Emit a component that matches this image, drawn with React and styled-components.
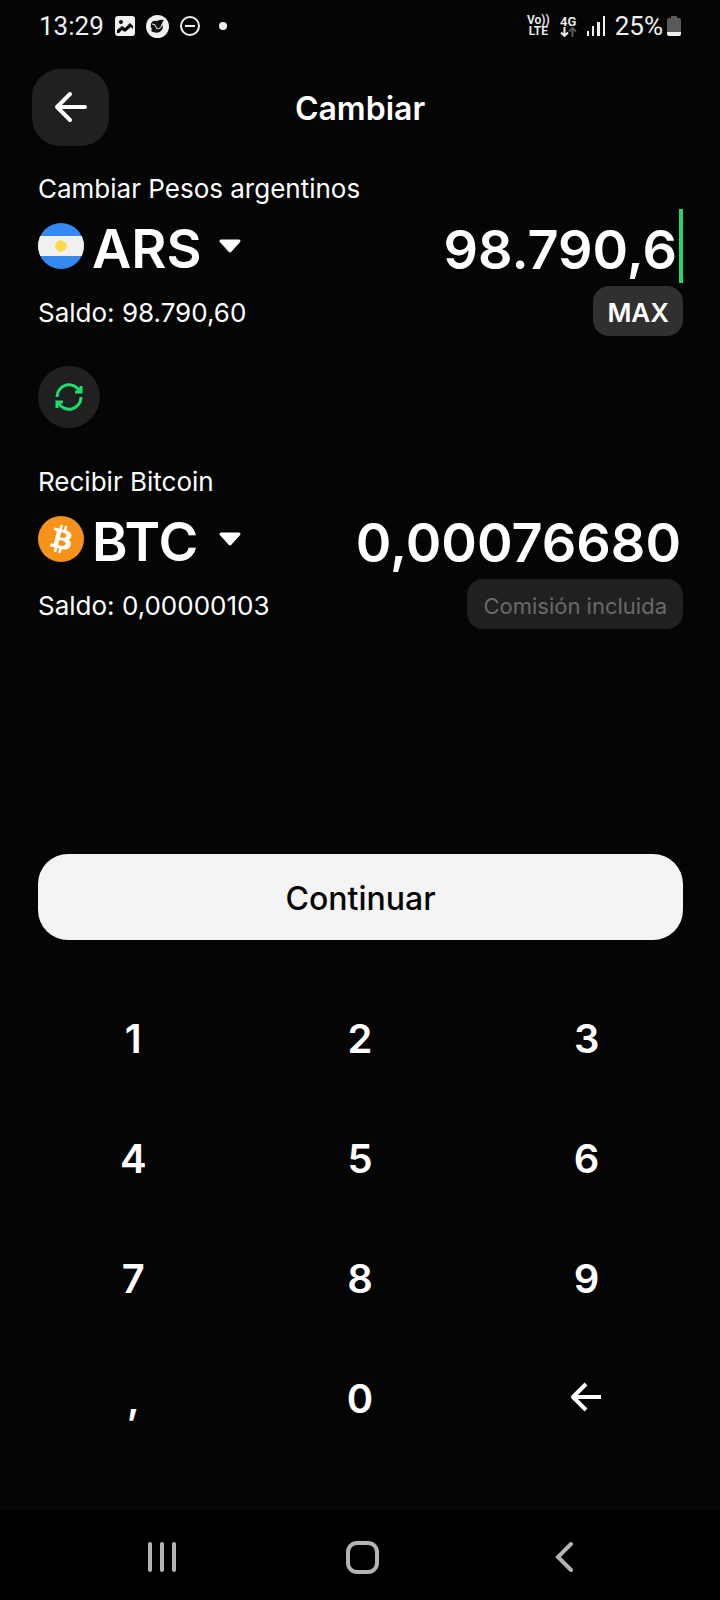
import styled, { createGlobalStyle } from "styled-components";
import { useState } from "react";

const GlobalStyle = createGlobalStyle`
  * {
    box-sizing: border-box;
  }

  body {
    margin: 0;
    background: #050505;
    color: #ffffff;
    font-family: Inter, sans-serif;
  }

  button,
  input,
  select {
    margin: 0;
    padding: 0;
    border: none;
    outline: none;
    color: inherit;
    font-family: inherit;
  }

  button {
    cursor: pointer;
  }

  svg {
    display: block;
    flex-shrink: 0;
  }
`;

const Screen = styled.div`
  display: flex;
  flex-direction: column;
  min-height: 100vh;
`;

const StatusBar = styled.div`
  display: flex;
  justify-content: space-between;
  align-items: center;
  height: 52px;
  padding: 0 39px;
  color: #f0f0f0;
  font-family: Roboto, sans-serif;
  font-size: 26px;
  line-height: 32px;
`;

const StatusGroup = styled.div`
  display: flex;
  align-items: center;
  gap: ${(props) => props.gap}px;
`;

const StackedText = styled.div`
  font-size: ${(props) => props.size}px;
  font-weight: 600;
  line-height: 11px;
  text-align: center;
`;

const Header = styled.header`
  display: grid;
  grid-template-columns: 77px 1fr 77px;
  align-items: center;
  padding: 17px 32px 0;
`;

const BackButton = styled.button`
  display: flex;
  justify-content: center;
  align-items: center;
  height: 77px;
  border-radius: 28px;
  background: #202020;
`;

const Title = styled.h1`
  margin: 0;
  padding-top: 2px;
  font-size: 32px;
  font-weight: 600;
  line-height: 40px;
  text-align: center;
`;

const Content = styled.main`
  padding: 26px 37px 0 38px;
`;

const Label = styled.label`
  display: block;
  font-size: 26px;
  line-height: 34px;
`;

const AmountRow = styled.div`
  display: flex;
  align-items: center;
  height: 74px;
  margin-top: 3px;
`;

const Picker = styled.div`
  display: grid;
  align-items: center;
  margin-left: 8px;

  select,
  svg {
    grid-area: 1 / 1;
  }

  svg {
    justify-self: end;
    pointer-events: none;
  }
`;

const CurrencySelect = styled.select`
  width: 149px;
  height: 74px;
  padding-top: 6px;
  appearance: none;
  background: transparent;
  font-size: 54px;
  font-weight: 600;
  line-height: 68px;

  option {
    background: #202020;
  }
`;

const AmountInput = styled.input`
  flex: 1;
  min-width: 0;
  height: 74px;
  padding: 6px 2px 0 0;
  background: transparent;
  font-size: 54px;
  font-weight: 600;
  line-height: 68px;
  text-align: right;
`;

const Caret = styled.span`
  width: 4px;
  height: 74px;
  background: #22d66b;
`;

const BalanceRow = styled.div`
  display: flex;
  justify-content: space-between;
  align-items: center;
  margin-top: 3px;
`;

const Balance = styled.span`
  padding-top: 4px;
  font-size: 26px;
  line-height: 34px;
`;

const MaxButton = styled.button`
  height: 50px;
  padding: 2px 14px 0;
  border-radius: 16px;
  background: #303030;
  font-size: 26px;
  font-weight: 600;
`;

const FeeTag = styled.span`
  padding: 10px 16px 6px;
  border-radius: 16px;
  background: #202020;
  color: #6a6a6a;
  font-size: 22px;
  line-height: 34px;
`;

const SwapButton = styled.button`
  display: flex;
  justify-content: center;
  align-items: center;
  width: 62px;
  height: 62px;
  margin: 30px 0 37px;
  border-radius: 50%;
  background: #202020;
`;

const ContinueButton = styled.button`
  display: block;
  width: 100%;
  height: 86px;
  margin-top: 225px;
  padding-top: 2px;
  border-radius: 30px;
  background: #f4f4f4;
  color: #050505;
  font-size: 32px;
  font-weight: 500;
`;

const Keypad = styled.div`
  display: grid;
  grid-template-columns: repeat(3, 1fr);
  grid-auto-rows: 120px;
  padding: 38px 20px 0;
`;

const Key = styled.button`
  display: flex;
  justify-content: center;
  align-items: center;
  background: transparent;
  font-size: 40px;
  font-weight: 600;
`;

const NavBar = styled.nav`
  display: grid;
  grid-template-columns: repeat(3, 1fr);
  height: 90px;
  margin-top: auto;
  padding: 4px 56px 0 62px;
  background: #000000;
`;

const NavButton = styled.button`
  display: flex;
  justify-content: center;
  align-items: center;
  background: transparent;
`;

const RATE = 128834898;
const KEYS = ["1", "2", "3", "4", "5", "6", "7", "8", "9", ",", "0"];

const formatAmount = (value) => {
  const [whole, decimals] = value.split(",");
  const grouped = whole.replace(/\B(?=(\d{3})+$)/g, ".");
  return decimals === undefined ? grouped : `${grouped},${decimals}`;
};

const toBitcoin = (value) =>
  (Number(value.replace(",", ".")) / RATE).toFixed(8).replace(".", ",");

function ArrowLeft({ cap }) {
  return (
    <svg
      width="34"
      height="34"
      viewBox="0 0 34 34"
      fill="none"
      stroke="#fff"
      strokeWidth="4"
      strokeLinecap={cap}
      strokeLinejoin="round"
    >
      <path d="M31 16H3M16 3 3 16l13 13" />
    </svg>
  );
}

function ArgentinaFlag() {
  return (
    <svg width="46" height="46" viewBox="0 0 46 46">
      <clipPath id="flag">
        <circle cx="23" cy="23" r="23" />
      </clipPath>
      <g clipPath="url(#flag)">
        <rect width="46" height="46" fill="#338af3" />
        <rect y="13" width="46" height="20" fill="#f0f0f0" />
        <circle cx="23" cy="23" r="5" fill="#ffda44" />
        <path
          d="M23 17v12M17 23h12M19 19l8 8M27 19l-8 8"
          stroke="#ffda44"
          strokeWidth="3"
        />
      </g>
    </svg>
  );
}

function BitcoinLogo() {
  return (
    <svg width="46" height="46" viewBox="0 0 32 32">
      <circle cx="16" cy="16" r="16" fill="#f7931a" />
      <path
        fill="#fff"
        d="M23.189 14.02c.314-2.096-1.283-3.223-3.465-3.975l.708-2.84-1.728-.43-.69 2.765c-.454-.114-.92-.22-1.385-.326l.695-2.783L15.596 6l-.708 2.839c-.376-.086-.746-.17-1.104-.26l.002-.009-2.384-.595-.46 1.846s1.283.294 1.256.312c.7.175.826.638.805 1.006l-.806 3.235c.048.012.11.03.18.057l-.183-.045-1.13 4.532c-.086.212-.303.531-.793.41.018.025-1.256-.313-1.256-.313l-.858 1.978 2.25.561c.418.105.828.215 1.231.318l-.715 2.872 1.727.43.708-2.84c.472.127.93.245 1.378.357l-.706 2.828 1.728.43.715-2.866c2.948.558 5.164.333 6.097-2.333.752-2.146-.037-3.385-1.588-4.192 1.13-.26 1.98-1.003 2.207-2.538zm-3.95 5.538c-.533 2.147-4.148.986-5.32.695l.95-3.805c1.172.293 4.929.872 4.37 3.11zm.535-5.569c-.487 1.953-3.495.96-4.47.717l.86-3.45c.975.243 4.118.696 3.61 2.733z"
      />
    </svg>
  );
}

function CurrencyPicker({ label, value, onChange }) {
  return (
    <Picker>
      <CurrencySelect
        aria-label={label}
        value={value}
        onChange={(e) => onChange(e.target.value)}
      >
        <option>ARS</option>
        <option>BTC</option>
      </CurrencySelect>
      <svg width="22" height="14" viewBox="0 0 22 14">
        <path
          d="M2 2h18l-9 10z"
          fill="#fff"
          stroke="#fff"
          strokeWidth="3"
          strokeLinejoin="round"
        />
      </svg>
    </Picker>
  );
}

function App() {
  const [amount, setAmount] = useState("98790,6");
  const [from, setFrom] = useState("ARS");
  const [to, setTo] = useState("BTC");

  const handleKey = (key) => {
    if (key === "," && amount.includes(",")) return;
    setAmount(amount === "0" && key !== "," ? key : amount + key);
  };

  const handleDelete = () => {
    setAmount(amount.slice(0, -1) || "0");
  };

  const handleSwap = () => {
    setFrom(to);
    setTo(from);
  };

  return (
    <Screen>
      <GlobalStyle />
      <StatusBar>
        <StatusGroup gap={11}>
          <span>13:29</span>
          <svg width="20" height="20" viewBox="0 0 20 20">
            <rect width="20" height="20" rx="3" fill="#f0f0f0" />
            <circle cx="6" cy="6" r="2" fill="#050505" />
            <path
              d="M2 14l5-4 3 2 5-5 3 3v3l-2-2-6 5-3-2-3 3H2z"
              fill="#050505"
            />
          </svg>
          <svg width="23" height="23" viewBox="0 0 23 23">
            <circle cx="11.5" cy="11.5" r="11.5" fill="#f0f0f0" />
            <path
              d="M5 9q1-4 6-3 4-2 7-1-2 2-2 4 2 4-1 7-3 3-8 1-3-1-1-3-2-2-1-5z"
              fill="#111"
            />
            <path
              d="M6 9q4 0 4 3t4 1q2-2 2-4"
              fill="none"
              stroke="#f0f0f0"
            />
          </svg>
          <svg width="20" height="20" viewBox="0 0 20 20">
            <g fill="none" stroke="#f0f0f0" strokeWidth="2">
              <circle cx="10" cy="10" r="9" />
              <path d="M5 10h10" />
            </g>
          </svg>
          <svg width="24" height="8" viewBox="0 0 24 8">
            <circle cx="12" cy="4" r="4" fill="#f0f0f0" />
          </svg>
        </StatusGroup>
        <StatusGroup gap={10}>
          <StackedText size={12}>
            Vo))
            <br />
            LTE
          </StackedText>
          <StackedText size={13}>
            4G
            <svg width="17" height="10" viewBox="0 0 17 10" fill="none">
              <path
                d="M4.500 0v9M1 5.500 4.500 9 8 5.500"
                stroke="#f0f0f0"
                strokeWidth="2"
              />
              <path
                d="M12.500 10V1M9 4.500 12.500 1 16 4.500"
                stroke="#5a5a5a"
                strokeWidth="2"
              />
            </svg>
          </StackedText>
          <svg width="18" height="20" viewBox="0 0 18 20" fill="#f0f0f0">
            <rect y="15" width="2" height="5" />
            <rect x="5" y="10" width="2" height="10" />
            <rect x="10" y="6" width="3" height="14" />
            <rect x="16" width="2" height="20" />
          </svg>
          <StatusGroup gap={4}>
            <span>25%</span>
            <svg width="14" height="20" viewBox="0 0 14 20">
              <path
                d="M4 0h6v2h2q2 0 2 2v12H0V4q0-2 2-2h2z"
                fill="#5a5a5a"
              />
              <path d="M0 16h14v2q0 2-2 2H2q-2 0-2-2z" fill="#f0f0f0" />
            </svg>
          </StatusGroup>
        </StatusGroup>
      </StatusBar>

      <Header>
        <BackButton aria-label="Volver">
          <ArrowLeft cap="round" />
        </BackButton>
        <Title>Cambiar</Title>
      </Header>

      <Content>
        <Label htmlFor="send">Cambiar Pesos argentinos</Label>
        <AmountRow>
          <ArgentinaFlag />
          <CurrencyPicker
            label="Moneda a cambiar"
            value={from}
            onChange={setFrom}
          />
          <AmountInput id="send" readOnly value={formatAmount(amount)} />
          <Caret />
        </AmountRow>
        <BalanceRow>
          <Balance>Saldo: 98.790,60</Balance>
          <MaxButton onClick={() => setAmount("98790,6")}>MAX</MaxButton>
        </BalanceRow>

        <SwapButton aria-label="Invertir monedas" onClick={handleSwap}>
          <svg
            width="28"
            height="28"
            viewBox="0 0 28 28"
            fill="none"
            stroke="#1be06e"
            strokeWidth="3"
          >
            <path d="M2 14a12 12 0 0 1 23-5M26 14a12 12 0 0 1-23 5" />
            <path d="M26 3v6h-6M2 25v-6h6" />
          </svg>
        </SwapButton>

        <Label htmlFor="receive">Recibir Bitcoin</Label>
        <AmountRow>
          <BitcoinLogo />
          <CurrencyPicker
            label="Moneda a recibir"
            value={to}
            onChange={setTo}
          />
          <AmountInput id="receive" readOnly value={toBitcoin(amount)} />
        </AmountRow>
        <BalanceRow>
          <Balance>Saldo: 0,00000103</Balance>
          <FeeTag>Comisión incluida</FeeTag>
        </BalanceRow>

        <ContinueButton>Continuar</ContinueButton>
      </Content>

      <Keypad>
        {KEYS.map((key) => (
          <Key key={key} onClick={() => handleKey(key)}>
            {key}
          </Key>
        ))}
        <Key aria-label="Borrar" onClick={handleDelete}>
          <ArrowLeft cap="butt" />
        </Key>
      </Keypad>

      <NavBar>
        <NavButton aria-label="Recientes">
          <svg width="30" height="32" viewBox="0 0 30 32">
            <path
              d="M3 3v26M15 3v26M27 3v26"
              stroke="#b4b4b4"
              strokeWidth="4"
              strokeLinecap="round"
            />
          </svg>
        </NavButton>
        <NavButton aria-label="Inicio">
          <svg width="33" height="33" viewBox="0 0 33 33">
            <rect
              x="2"
              y="2"
              width="29"
              height="29"
              rx="9"
              fill="none"
              stroke="#b4b4b4"
              strokeWidth="4"
            />
          </svg>
        </NavButton>
        <NavButton aria-label="Atrás">
          <svg width="18" height="32" viewBox="0 0 18 32">
            <path
              d="M16 3 3 16l13 13"
              fill="none"
              stroke="#b4b4b4"
              strokeWidth="4"
              strokeLinecap="round"
            />
          </svg>
        </NavButton>
      </NavBar>
    </Screen>
  );
}

export default App;
